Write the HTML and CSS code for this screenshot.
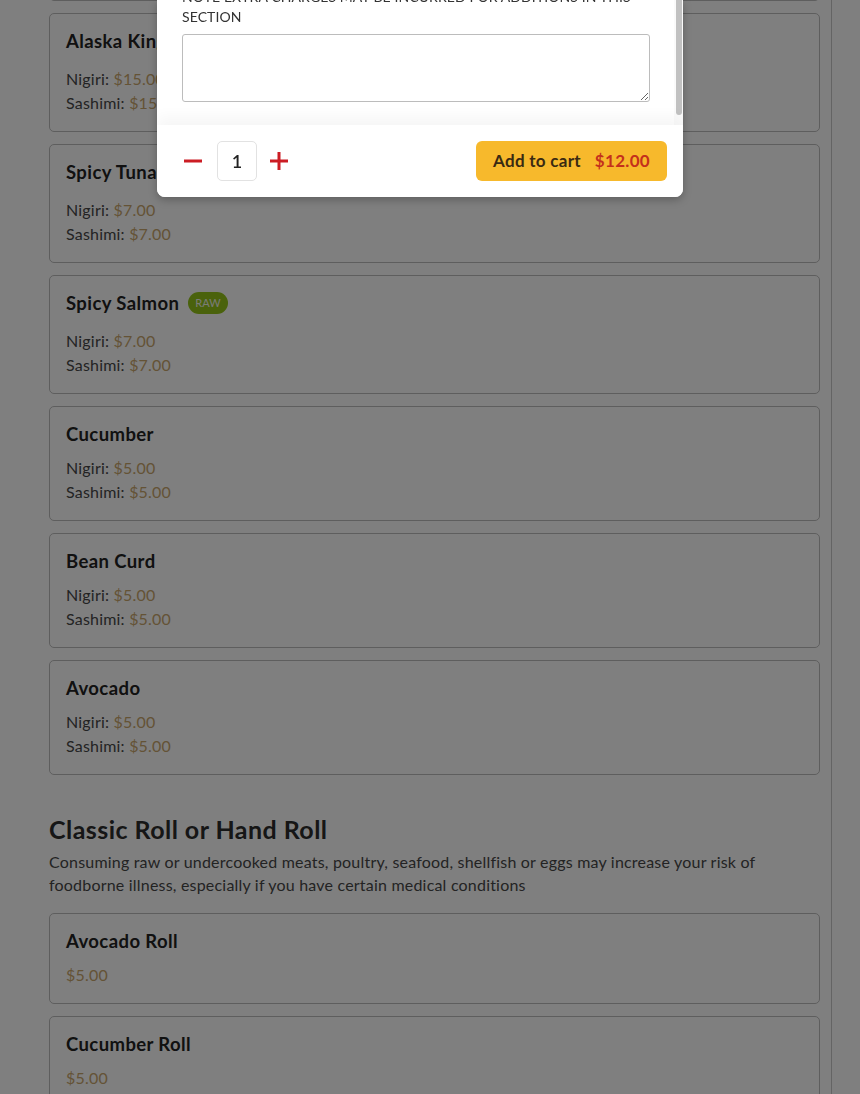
FILE: index.html
```html
<!DOCTYPE html>
<html lang="en">
<head>
<meta charset="utf-8">
<title>Menu</title>
<link rel="stylesheet" href="styles.css">
</head>
<body>
<div class="page">
  <main class="menu">
    <div class="items">
      <article class="card card-tall">
        <div class="card-head has-badge"><h3>Yellowtail</h3><span class="badge">RAW</span></div>
        <p class="line">Nigiri: <span class="price">$7.00</span></p>
        <p class="line">Sashimi: <span class="price">$7.00</span></p>
      </article>
      <article class="card">
        <div class="card-head has-badge"><h3>Alaska King Salmon</h3><span class="badge">RAW</span></div>
        <p class="line">Nigiri: <span class="price">$15.00</span></p>
        <p class="line">Sashimi: <span class="price">$15.00</span></p>
      </article>
      <article class="card">
        <div class="card-head has-badge"><h3>Spicy Tuna</h3><span class="badge">RAW</span></div>
        <p class="line">Nigiri: <span class="price">$7.00</span></p>
        <p class="line">Sashimi: <span class="price">$7.00</span></p>
      </article>
      <article class="card">
        <div class="card-head has-badge"><h3>Spicy Salmon</h3><span class="badge">RAW</span></div>
        <p class="line">Nigiri: <span class="price">$7.00</span></p>
        <p class="line">Sashimi: <span class="price">$7.00</span></p>
      </article>
      <article class="card">
        <div class="card-head"><h3>Cucumber</h3></div>
        <p class="line">Nigiri: <span class="price">$5.00</span></p>
        <p class="line">Sashimi: <span class="price">$5.00</span></p>
      </article>
      <article class="card">
        <div class="card-head"><h3>Bean Curd</h3></div>
        <p class="line">Nigiri: <span class="price">$5.00</span></p>
        <p class="line">Sashimi: <span class="price">$5.00</span></p>
      </article>
      <article class="card">
        <div class="card-head"><h3>Avocado</h3></div>
        <p class="line">Nigiri: <span class="price">$5.00</span></p>
        <p class="line">Sashimi: <span class="price">$5.00</span></p>
      </article>
    </div>

    <section class="section">
      <h2 class="section-title">Classic Roll or Hand Roll</h2>
      <p class="section-desc">Consuming raw or undercooked meats, poultry, seafood, shellfish or eggs may increase your risk of<br>foodborne illness, especially if you have certain medical conditions</p>
      <div class="items">
        <article class="card">
          <div class="card-head"><h3>Avocado Roll</h3></div>
          <p class="line"><span class="price">$5.00</span></p>
        </article>
        <article class="card">
          <div class="card-head"><h3>Cucumber Roll</h3></div>
          <p class="line"><span class="price">$5.00</span></p>
        </article>
      </div>
    </section>
  </main>
</div>

<div class="overlay"></div>

<div class="modal">
  <div class="modal-body">
    <div class="modal-content">
      <p class="note">NOTE EXTRA CHARGES MAY BE INCURRED FOR ADDITIONS IN THIS<br>SECTION</p>
      <textarea class="note-input"></textarea>
    </div>
    <div class="scrollbar"><div class="thumb"></div></div>
  </div>
  <div class="modal-foot">
    <div class="qty">
      <button class="qty-btn" type="button" aria-label="Decrease">
        <svg width="18" height="18" viewBox="0 0 18 18"><rect x="0" y="7.5" width="18" height="3" fill="#cc1d24"/></svg>
      </button>
      <div class="qty-value">1</div>
      <button class="qty-btn" type="button" aria-label="Increase">
        <svg width="18" height="18" viewBox="0 0 18 18"><rect x="0" y="7.5" width="18" height="3" fill="#cc1d24"/><rect x="7.5" y="0" width="3" height="18" fill="#cc1d24"/></svg>
      </button>
    </div>
    <button class="add-btn" type="button"><span class="add-label">Add to cart</span><span class="add-price">$12.00</span></button>
  </div>
</div>
</body>
</html>
```

FILE: styles.css
```css
* { box-sizing: border-box; }

html, body {
  margin: 0;
  padding: 0;
  background: #ffffff;
  font-family: Lato, "Open Sans", "Liberation Sans", sans-serif;
  color: #222;
  overflow: hidden;
}

.page {
  width: 832px;
  height: 1094px;
  overflow: hidden;
  border-right: 1px solid #c8c8c8;
}

.menu {
  margin-top: -118px;
  padding: 0 11px 0 49px;
}

.items {
  display: flex;
  flex-direction: column;
  gap: 12px;
}

.card {
  background: #fff;
  border: 1px solid #bdbdbd;
  border-radius: 5px;
  padding: 16px;
}

.card-tall { height: 119px; }

.card-head {
  display: flex;
  align-items: center;
  gap: 9px;
  height: 22px;
  margin-bottom: 11px;
}

.card-head.has-badge { margin-bottom: 15px; }

.card-head h3 {
  margin: 0;
  font-size: 18.5px;
  line-height: 21px;
  font-weight: 700;
  letter-spacing: 0.4px;
  color: #222;
}

.badge {
  display: inline-block;
  height: 22px;
  line-height: 22px;
  padding: 0 7px;
  border-radius: 11px;
  background: #94c418;
  color: #f4f8ec;
  font-size: 11px;
}

.line {
  margin: 0;
  font-size: 16px;
  line-height: 24px;
  letter-spacing: 0.2px;
  color: #474747;
}

.price { color: #c9a66c; }

.section { margin-top: 38px; }

.section-title {
  margin: 0 0 5px;
  font-size: 25px;
  line-height: 32px;
  font-weight: 700;
  letter-spacing: 0.45px;
  color: #2c2c2c;
}

.section-desc {
  margin: 0 0 17px;
  font-size: 16px;
  line-height: 23px;
  letter-spacing: 0.2px;
  color: #474747;
}

.overlay {
  position: fixed;
  inset: 0;
  background: rgba(0, 0, 0, 0.5);
}

.modal {
  position: absolute;
  left: 157px;
  top: 0;
  width: 526px;
  background: #fff;
  border-radius: 0 0 8px 8px;
  overflow: hidden;
  box-shadow: 0 3px 8px rgba(0, 0, 0, 0.25);
}

.modal-body {
  position: relative;
  height: 125px;
  overflow: hidden;
  background: #fff;
}

.modal-content {
  margin-top: -13px;
  padding: 0 33px 0 25px;
}

.note {
  margin: 0 0 7px;
  font-size: 14px;
  line-height: 20px;
  letter-spacing: 0.1px;
  color: #333;
}

.note-input {
  display: block;
  width: 100%;
  height: 68px;
  border: 1px solid #bcbcbc;
  border-radius: 3px;
  resize: vertical;
  font-family: inherit;
  background: #fff;
}

.scrollbar {
  position: absolute;
  top: 0;
  right: 0;
  bottom: 0;
  width: 9px;
  background: #fafafa;
}

.thumb {
  position: absolute;
  top: 0;
  right: 1px;
  width: 6px;
  height: 115px;
  border-radius: 0 0 3px 3px;
  background: #c1c1c1;
}

.modal-foot {
  position: relative;
  height: 72px;
  padding: 16px;
  display: flex;
  align-items: center;
  justify-content: space-between;
  background: #fff;
  box-shadow: 0 -8px 14px rgba(0, 0, 0, 0.04);
}

.qty {
  display: flex;
  align-items: center;
}

.qty-btn {
  width: 40px;
  height: 40px;
  padding: 0;
  border: 0;
  background: transparent;
  display: flex;
  align-items: center;
  justify-content: center;
}

.qty-value {
  width: 40px;
  height: 40px;
  margin: 0 2px 0 4px;
  border: 1px solid #e2e2e2;
  border-radius: 5px;
  display: flex;
  align-items: center;
  justify-content: center;
  font-size: 18px;
  font-weight: 600;
  color: #222;
}

.add-btn {
  width: 191px;
  height: 40px;
  padding: 0 17px 2px;
  border: 0;
  border-radius: 6px;
  background: #f7b92c;
  display: flex;
  align-items: center;
  justify-content: space-between;
  font-family: inherit;
  font-size: 17px;
  font-weight: 700;
  letter-spacing: 0.3px;
}

.add-label { color: #3a2a12; }
.add-price { color: #c4301c; }
```
